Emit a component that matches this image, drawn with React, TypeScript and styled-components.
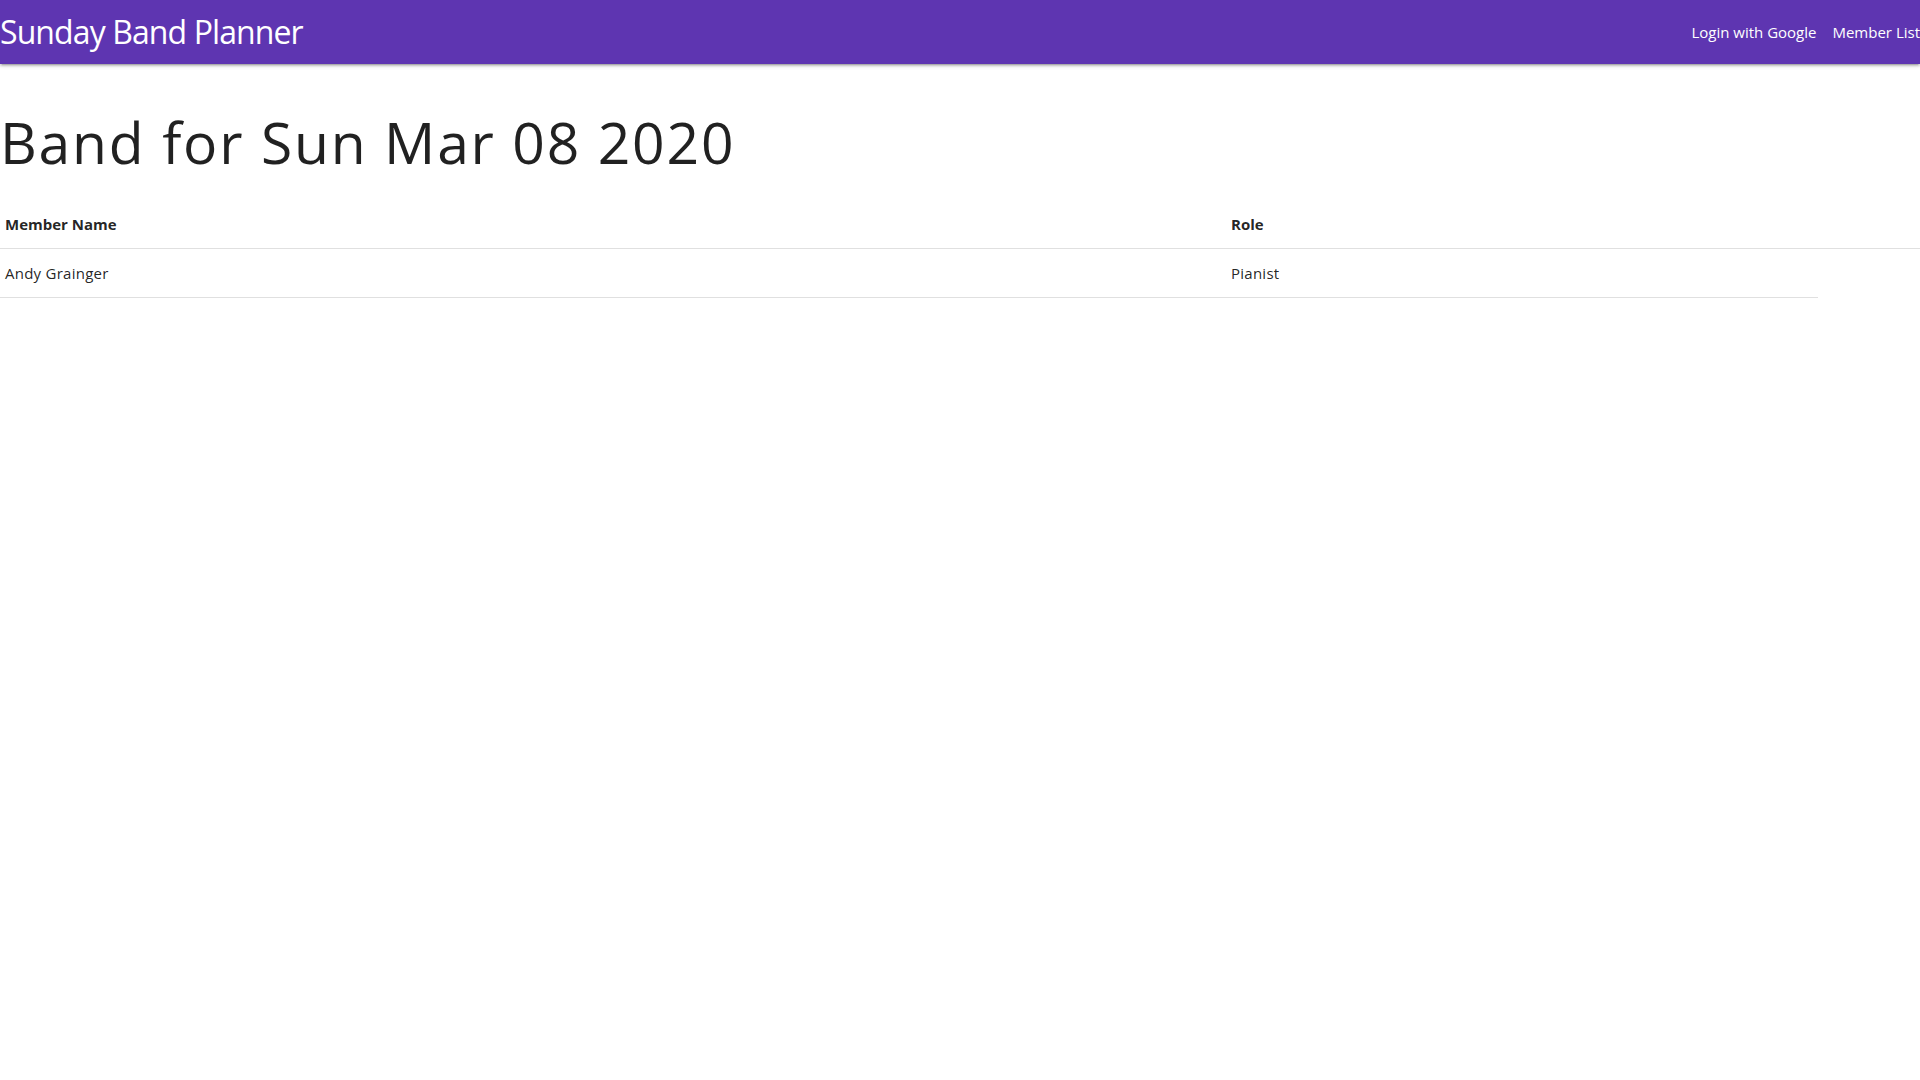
import React from "react";
import styled, { createGlobalStyle } from "styled-components";

const GlobalStyle = createGlobalStyle`
  html, body { margin: 0; padding: 0; background: #ffffff; overflow-x: hidden; }
  body {
    font-family: "Open Sans", "Noto Sans", sans-serif;
    color: rgba(0, 0, 0, 0.87);
  }
  * { box-sizing: border-box; }
`;

const NavBar = styled.nav`
  height: 64px;
  background: #5e35b1;
  display: flex;
  align-items: center;
  justify-content: space-between;
  box-shadow: 0 2px 2px 0 rgba(0, 0, 0, 0.14), 0 3px 1px -2px rgba(0, 0, 0, 0.12),
    0 1px 5px 0 rgba(0, 0, 0, 0.2);
  position: relative;
  z-index: 1;
`;

const Brand = styled.a`
  color: #ffffff;
  font-size: 32px;
  letter-spacing: -0.9px;
  line-height: 62px;
  text-decoration: none;
  white-space: nowrap;
`;

const NavLinks = styled.ul`
  display: flex;
  gap: 16px;
  list-style: none;
  margin: 0;
  padding: 0;
`;

const NavLink = styled.a`
  color: #ffffff;
  font-size: 15px;
  line-height: 64px;
  text-decoration: none;
  white-space: nowrap;
`;

const Main = styled.main`
  padding: 0;
`;

const Title = styled.h1`
  font-size: 57px;
  letter-spacing: 1.8px;
  font-weight: 400;
  line-height: 64px;
  margin: 46px 0 26px 0;
  color: rgba(0, 0, 0, 0.87);
`;

const Table = styled.div`
  display: flex;
  flex-direction: column;
`;

const Row = styled.div<{ $width?: string }>`
  display: grid;
  grid-template-columns: 1226px 1fr;
  width: ${(p) => p.$width ?? "100%"};
  border-bottom: 1px solid rgba(0, 0, 0, 0.12);
`;

const Cell = styled.div<{ $head?: boolean }>`
  padding: 15px 5px;
  font-size: 15px;
  line-height: 18px;
  letter-spacing: ${(p) => (p.$head ? "0" : "0.25px")};
  font-weight: ${(p) => (p.$head ? 700 : 400)};
  color: rgba(0, 0, 0, 0.87);
`;

export default function App() {
  return (
    <>
      <GlobalStyle />
      <NavBar>
        <Brand href="#">Sunday Band Planner</Brand>
        <NavLinks>
          <li>
            <NavLink href="#">Login with Google</NavLink>
          </li>
          <li>
            <NavLink href="#">Member List</NavLink>
          </li>
        </NavLinks>
      </NavBar>
      <Main>
        <Title>Band for Sun Mar 08 2020</Title>
        <Table>
          <Row>
            <Cell $head>Member Name</Cell>
            <Cell $head>Role</Cell>
          </Row>
          <Row $width="1818px">
            <Cell>Andy Grainger</Cell>
            <Cell>Pianist</Cell>
          </Row>
        </Table>
      </Main>
    </>
  );
}
